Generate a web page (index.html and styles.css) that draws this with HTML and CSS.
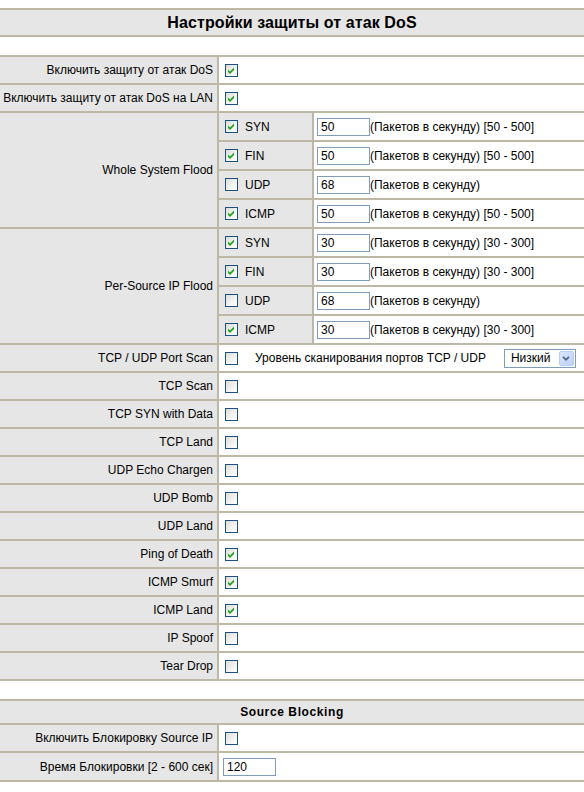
FILE: index.html
```html
<!DOCTYPE html>
<html lang="ru">
<head>
<meta charset="utf-8">
<title>Настройки защиты от атак DoS</title>
<link rel="stylesheet" href="styles.css">
</head>
<body>
<table class="grid">
  <tr><th class="title" colspan="3">Настройки защиты от атак DoS</th></tr>
  <tr><td class="blank" colspan="3"></td></tr>

  <tr class="r28"><td class="lbl">Включить защиту от атак DoS</td><td class="val" colspan="2"><span class="cb on"><svg viewBox="0 0 11 11"><path d="M2 4.5 L4 6.5 L8 2.5 L8 5 L4 9 L2 7 Z"/></svg></span></td></tr>
  <tr class="r28"><td class="lbl">Включить защиту от атак DoS на LAN</td><td class="val" colspan="2"><span class="cb on"><svg viewBox="0 0 11 11"><path d="M2 4.5 L4 6.5 L8 2.5 L8 5 L4 9 L2 7 Z"/></svg></span></td></tr>

  <tr class="r29"><td class="lbl" rowspan="4">Whole System Flood</td><td class="sub"><span class="cb on"><svg viewBox="0 0 11 11"><path d="M2 4.5 L4 6.5 L8 2.5 L8 5 L4 9 L2 7 Z"/></svg></span><span class="opt">SYN</span></td><td class="inp"><span class="box">50</span><span>(Пакетов в секунду) [50 - 500]</span></td></tr>
  <tr class="r29"><td class="sub"><span class="cb on"><svg viewBox="0 0 11 11"><path d="M2 4.5 L4 6.5 L8 2.5 L8 5 L4 9 L2 7 Z"/></svg></span><span class="opt">FIN</span></td><td class="inp"><span class="box">50</span><span>(Пакетов в секунду) [50 - 500]</span></td></tr>
  <tr class="r29"><td class="sub"><span class="cb"></span><span class="opt">UDP</span></td><td class="inp"><span class="box">68</span><span>(Пакетов в секунду)</span></td></tr>
  <tr class="r29"><td class="sub"><span class="cb on"><svg viewBox="0 0 11 11"><path d="M2 4.5 L4 6.5 L8 2.5 L8 5 L4 9 L2 7 Z"/></svg></span><span class="opt">ICMP</span></td><td class="inp"><span class="box">50</span><span>(Пакетов в секунду) [50 - 500]</span></td></tr>

  <tr class="r29"><td class="lbl" rowspan="4">Per-Source IP Flood</td><td class="sub"><span class="cb on"><svg viewBox="0 0 11 11"><path d="M2 4.5 L4 6.5 L8 2.5 L8 5 L4 9 L2 7 Z"/></svg></span><span class="opt">SYN</span></td><td class="inp"><span class="box">30</span><span>(Пакетов в секунду) [30 - 300]</span></td></tr>
  <tr class="r29"><td class="sub"><span class="cb on"><svg viewBox="0 0 11 11"><path d="M2 4.5 L4 6.5 L8 2.5 L8 5 L4 9 L2 7 Z"/></svg></span><span class="opt">FIN</span></td><td class="inp"><span class="box">30</span><span>(Пакетов в секунду) [30 - 300]</span></td></tr>
  <tr class="r29"><td class="sub"><span class="cb"></span><span class="opt">UDP</span></td><td class="inp"><span class="box">68</span><span>(Пакетов в секунду)</span></td></tr>
  <tr class="r29"><td class="sub"><span class="cb on"><svg viewBox="0 0 11 11"><path d="M2 4.5 L4 6.5 L8 2.5 L8 5 L4 9 L2 7 Z"/></svg></span><span class="opt">ICMP</span></td><td class="inp"><span class="box">30</span><span>(Пакетов в секунду) [30 - 300]</span></td></tr>

  <tr class="r28"><td class="lbl">TCP / UDP Port Scan</td><td class="val" colspan="2"><div class="scan"><span class="cb"></span><span class="scantext">Уровень сканирования портов TCP / UDP</span><span class="select"><span class="seltext">Низкий</span><span class="selbtn"><svg viewBox="0 0 9 6"><path d="M1 1 L4.5 4.5 L8 1" fill="none" stroke="#4d6185" stroke-width="2"/></svg></span></span></div></td></tr>
  <tr class="r28"><td class="lbl">TCP Scan</td><td class="val" colspan="2"><span class="cb"></span></td></tr>
  <tr class="r28"><td class="lbl">TCP SYN with Data</td><td class="val" colspan="2"><span class="cb"></span></td></tr>
  <tr class="r28"><td class="lbl">TCP Land</td><td class="val" colspan="2"><span class="cb"></span></td></tr>
  <tr class="r28"><td class="lbl">UDP Echo Chargen</td><td class="val" colspan="2"><span class="cb"></span></td></tr>
  <tr class="r28"><td class="lbl">UDP Bomb</td><td class="val" colspan="2"><span class="cb"></span></td></tr>
  <tr class="r28"><td class="lbl">UDP Land</td><td class="val" colspan="2"><span class="cb"></span></td></tr>
  <tr class="r28"><td class="lbl">Ping of Death</td><td class="val" colspan="2"><span class="cb on"><svg viewBox="0 0 11 11"><path d="M2 4.5 L4 6.5 L8 2.5 L8 5 L4 9 L2 7 Z"/></svg></span></td></tr>
  <tr class="r28"><td class="lbl">ICMP Smurf</td><td class="val" colspan="2"><span class="cb on"><svg viewBox="0 0 11 11"><path d="M2 4.5 L4 6.5 L8 2.5 L8 5 L4 9 L2 7 Z"/></svg></span></td></tr>
  <tr class="r28"><td class="lbl">ICMP Land</td><td class="val" colspan="2"><span class="cb on"><svg viewBox="0 0 11 11"><path d="M2 4.5 L4 6.5 L8 2.5 L8 5 L4 9 L2 7 Z"/></svg></span></td></tr>
  <tr class="r28"><td class="lbl">IP Spoof</td><td class="val" colspan="2"><span class="cb"></span></td></tr>
  <tr class="r28"><td class="lbl">Tear Drop</td><td class="val" colspan="2"><span class="cb"></span></td></tr>

  <tr><td class="blank" colspan="3"></td></tr>
  <tr><th class="subtitle" colspan="3">Source Blocking</th></tr>
  <tr class="r28"><td class="lbl">Включить Блокировку Source IP</td><td class="val" colspan="2"><span class="cb"></span></td></tr>
  <tr class="r29"><td class="lbl">Время Блокировки [2 - 600 сек]</td><td class="val tight" colspan="2"><span class="box">120</span></td></tr>
</table>
</body>
</html>
```

FILE: styles.css
```css
body {
  margin: 8px 0 0;
  background: #fff;
  color: #000;
  font: 12px "Liberation Sans", Arial, sans-serif;
}

.grid {
  width: 100%;
  border-collapse: separate;
  border-spacing: 0;
  border-top: 2px solid #bcb8a5;
}

.grid td,
.grid th {
  box-sizing: border-box;
  padding: 0;
  border-bottom: 2px solid #bcb8a5;
  vertical-align: middle;
}

.title {
  height: 27px;
  background: #e6e6e6;
  font-size: 16px;
  font-weight: bold;
  letter-spacing: 0.1px;
  text-align: center;
}

.subtitle {
  height: 24px;
  background: #e6e6e6;
  font-size: 12px;
  font-weight: bold;
  letter-spacing: 0.6px;
  text-align: center;
}

.blank {
  height: 20px;
  background: #fff;
}

.r28 > td { height: 28px; }
.r29 > td { height: 29px; }

.lbl {
  width: 219px;
  background: #e6e6e6;
  text-align: right;
  padding-right: 4px !important;
  border-right: 2px solid #bcb8a5;
  white-space: nowrap;
}

.val {
  padding-left: 6px !important;
  background: #fff;
}

.val.tight {
  padding-left: 4px !important;
}

.sub {
  width: 95px;
  background: #e6e6e6;
  border-right: 2px solid #bcb8a5;
  padding-left: 6px !important;
  white-space: nowrap;
}

.sub .cb,
.sub .opt {
  vertical-align: middle;
}

.opt {
  margin-left: 7px;
}

.inp {
  padding-left: 3px !important;
  background: #fff;
  white-space: nowrap;
}

.inp > span {
  vertical-align: middle;
}

.cb {
  display: inline-block;
  vertical-align: middle;
  width: 11px;
  height: 11px;
  border: 1px solid #1c5180;
  background: linear-gradient(135deg, #dcdcd7 0%, #f4f4f1 60%, #ffffff 100%);
}

.cb svg {
  display: block;
  width: 11px;
  height: 11px;
  fill: #21a121;
}

.box {
  display: inline-block;
  box-sizing: border-box;
  width: 53px;
  height: 18px;
  line-height: 16px;
  padding-left: 3px;
  border: 1px solid #7f9db9;
  background: #fff;
  vertical-align: middle;
}

.scan {
  display: flex;
  align-items: center;
}

.scantext {
  margin-left: 17px;
}

.select {
  display: flex;
  align-items: center;
  box-sizing: border-box;
  width: 72px;
  height: 19px;
  margin-left: 18px;
  border: 1px solid #7f9db9;
  background: #fff;
  padding: 1px;
}

.seltext {
  flex: 1;
  padding-left: 5px;
}

.selbtn {
  display: flex;
  align-items: center;
  justify-content: center;
  width: 15px;
  height: 15px;
  box-sizing: border-box;
  border: 1px solid #b9cdf5;
  border-radius: 2px;
  background: linear-gradient(135deg, #dbe6fd 0%, #bcd0fa 100%);
}

.selbtn svg {
  width: 8px;
  height: 5px;
}
```
